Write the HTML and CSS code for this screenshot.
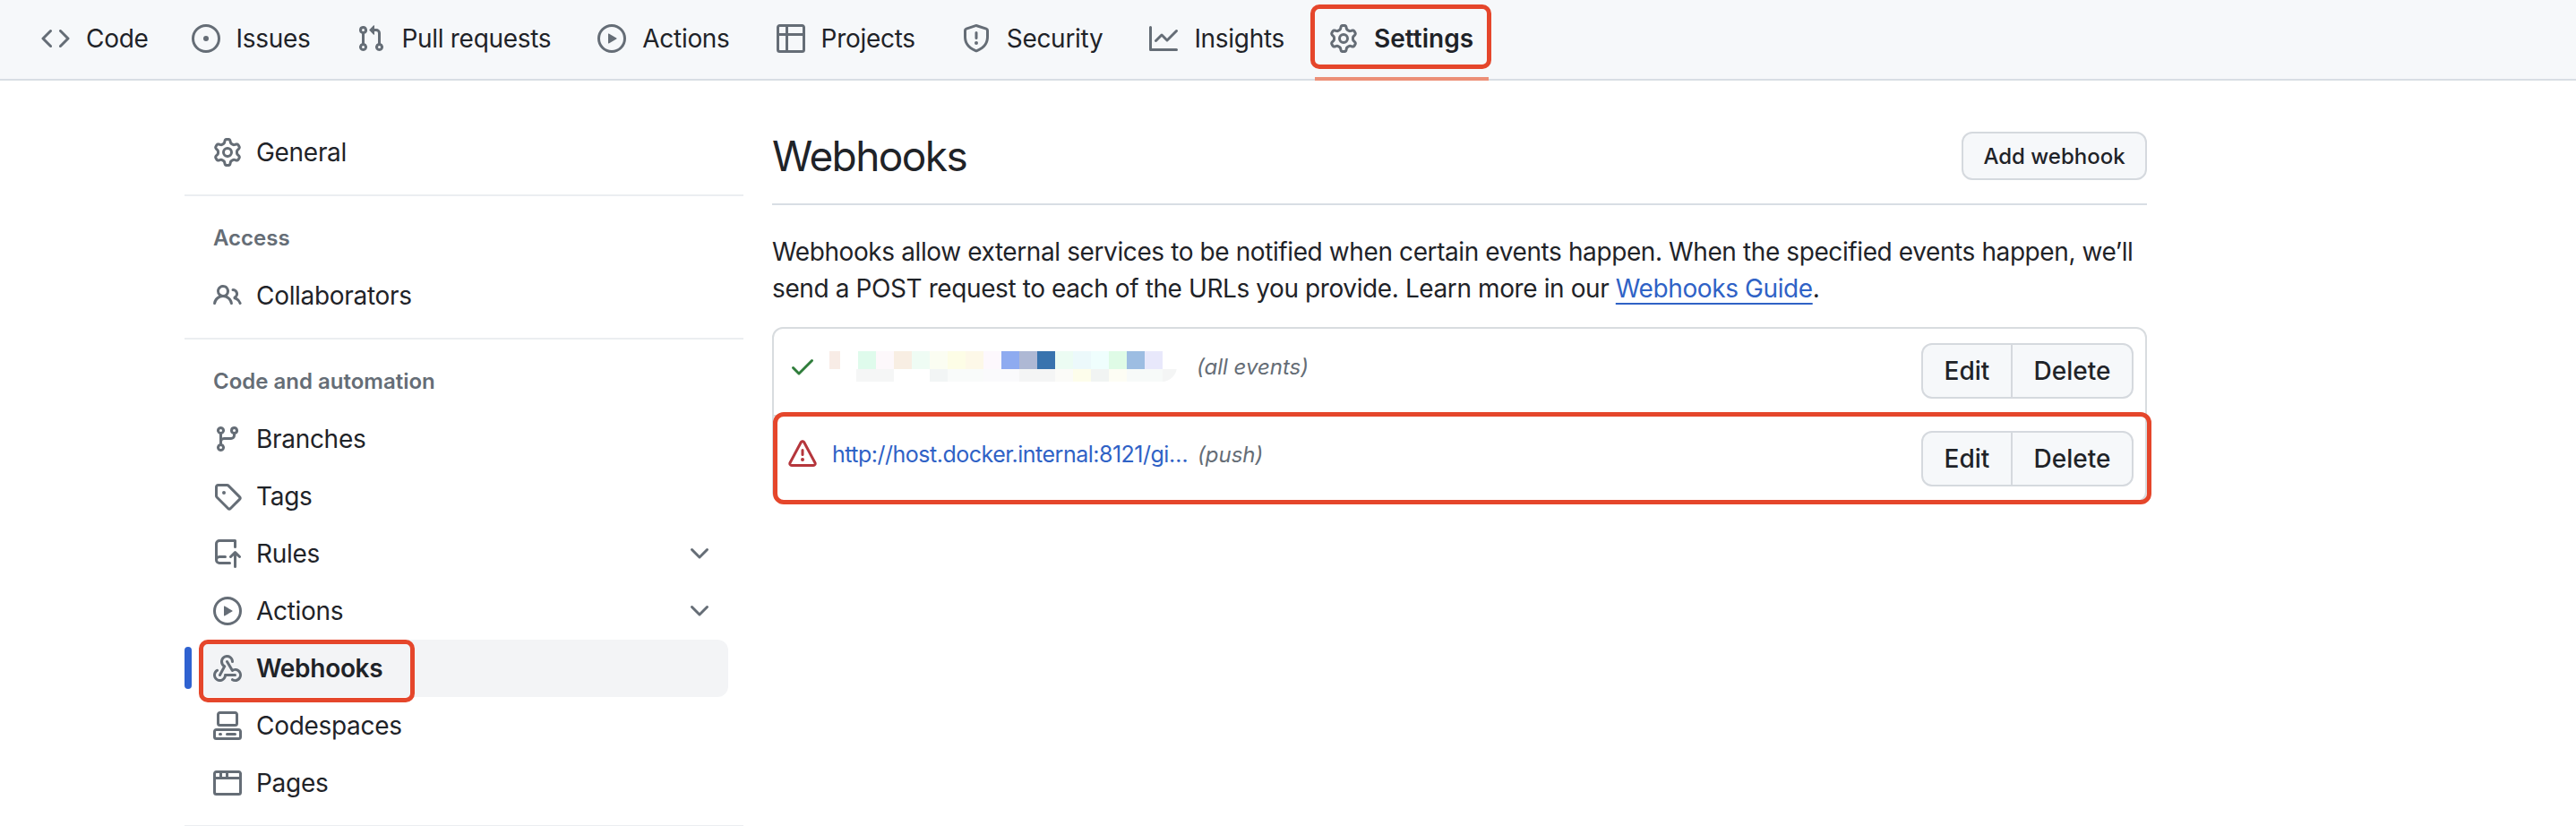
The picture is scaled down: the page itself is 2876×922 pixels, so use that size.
FILE: index.html
```html
<!DOCTYPE html>
<html lang="en">
<head>
    <meta charset="UTF-8">
    <title>Webhooks</title>
    <link rel="stylesheet" href="styles.css">
</head>
<body>
    <svg class="icon-defs" xmlns="http://www.w3.org/2000/svg">
        <symbol id="i-code" viewBox="0 0 16 16"><path d="m11.28 3.22 4.25 4.25a.75.75 0 0 1 0 1.06l-4.25 4.25a.749.749 0 0 1-1.275-.326.749.749 0 0 1 .215-.734L13.94 8l-3.72-3.72a.749.749 0 0 1 .326-1.275.749.749 0 0 1 .734.215Zm-6.56 0a.751.751 0 0 1 1.042.018.751.751 0 0 1 .018 1.042L2.06 8l3.72 3.72a.749.749 0 0 1-.326 1.275.749.749 0 0 1-.734-.215L.47 8.53a.75.75 0 0 1 0-1.06Z"/></symbol>
        <symbol id="i-issue" viewBox="0 0 16 16"><path d="M8 9.5a1.5 1.5 0 1 0 0-3 1.5 1.5 0 0 0 0 3Z"/><path d="M8 0a8 8 0 1 1 0 16A8 8 0 0 1 8 0ZM1.5 8a6.5 6.5 0 1 0 13 0 6.5 6.5 0 0 0-13 0Z"/></symbol>
        <symbol id="i-pull" viewBox="0 0 16 16"><path d="M1.5 3.25a2.25 2.25 0 1 1 3 2.122v5.256a2.251 2.251 0 1 1-1.5 0V5.372A2.25 2.25 0 0 1 1.5 3.25Zm5.677-.177L9.573.677A.25.25 0 0 1 10 .854V2.5h1A2.5 2.5 0 0 1 13.5 5v5.628a2.251 2.251 0 1 1-1.5 0V5a1 1 0 0 0-1-1h-1v1.646a.25.25 0 0 1-.427.177L7.177 3.427a.25.25 0 0 1 0-.354ZM3.75 2.5a.75.75 0 1 0 0 1.5.75.75 0 0 0 0-1.5Zm0 9.5a.75.75 0 1 0 0 1.5.75.75 0 0 0 0-1.5Zm8.25.75a.75.75 0 1 0 1.5 0 .75.75 0 0 0-1.5 0Z"/></symbol>
        <symbol id="i-play" viewBox="0 0 16 16"><path d="M8 0a8 8 0 1 1 0 16A8 8 0 0 1 8 0ZM1.5 8a6.5 6.5 0 1 0 13 0 6.5 6.5 0 0 0-13 0Zm4.879-2.773 4.264 2.559a.25.25 0 0 1 0 .428l-4.264 2.559A.25.25 0 0 1 6 10.559V5.442a.25.25 0 0 1 .379-.215Z"/></symbol>
        <symbol id="i-table" viewBox="0 0 16 16"><path d="M0 1.75C0 .784.784 0 1.75 0h12.5C15.216 0 16 .784 16 1.75v12.5A1.75 1.75 0 0 1 14.25 16H1.75A1.75 1.75 0 0 1 0 14.25ZM6.5 6.5v8h7.75a.25.25 0 0 0 .25-.25V6.5Zm8-1.5V1.75a.25.25 0 0 0-.25-.25H6.5V5Zm-13 1.5v7.75c0 .138.112.25.25.25H5v-8ZM5 5V1.5H1.75a.25.25 0 0 0-.25.25V5Z"/></symbol>
        <symbol id="i-shield" viewBox="0 0 16 16"><path d="M7.467.133a1.748 1.748 0 0 1 1.066 0l5.25 1.68A1.75 1.75 0 0 1 15 3.48V7c0 1.566-.32 3.182-1.303 4.682-.983 1.498-2.585 2.813-5.032 3.855a1.697 1.697 0 0 1-1.33 0c-2.447-1.042-4.049-2.357-5.032-3.855C1.32 10.182 1 8.566 1 7V3.48a1.75 1.75 0 0 1 1.217-1.667Zm.61 1.429a.25.25 0 0 0-.153 0l-5.25 1.68a.25.25 0 0 0-.174.238V7c0 1.358.275 2.666 1.057 3.86.784 1.194 2.121 2.34 4.366 3.297a.196.196 0 0 0 .154 0c2.245-.956 3.582-2.104 4.366-3.298C13.225 9.666 13.5 8.36 13.5 7V3.48a.251.251 0 0 0-.174-.237l-5.25-1.68ZM8.75 4.75v3a.75.75 0 0 1-1.5 0v-3a.75.75 0 0 1 1.5 0ZM9 10.5a1 1 0 1 1-2 0 1 1 0 0 1 2 0Z"/></symbol>
        <symbol id="i-graph" viewBox="0 0 16 16"><path d="M1.5 1.75V13.5h13.75a.75.75 0 0 1 0 1.5H.75a.75.75 0 0 1-.75-.75V1.75a.75.75 0 0 1 1.5 0Zm14.28 2.53-5.25 5.25a.75.75 0 0 1-1.06 0L7 7.06 4.28 9.78a.751.751 0 0 1-1.042-.018.751.751 0 0 1-.018-1.042l3.25-3.25a.75.75 0 0 1 1.06 0L10 7.94l4.72-4.72a.751.751 0 0 1 1.042.018.751.751 0 0 1 .018 1.042Z"/></symbol>
        <symbol id="i-gear" viewBox="0 0 16 16"><path d="M8 0a8.2 8.2 0 0 1 .701.031C9.444.095 9.99.645 10.16 1.29l.288 1.107c.018.066.079.158.212.224.231.114.454.243.668.386.123.082.233.09.299.071l1.103-.303c.644-.176 1.392.021 1.82.63.27.385.506.792.704 1.218.315.675.111 1.422-.364 1.891l-.814.806c-.049.048-.098.147-.088.294.016.257.016.515 0 .772-.01.147.038.246.088.294l.814.806c.475.469.679 1.216.364 1.891a7.977 7.977 0 0 1-.704 1.217c-.428.61-1.176.807-1.82.63l-1.102-.302c-.067-.019-.177-.011-.3.071a5.909 5.909 0 0 1-.668.386c-.133.066-.194.158-.211.224l-.29 1.106c-.168.646-.715 1.196-1.458 1.26a8.006 8.006 0 0 1-1.402 0c-.743-.064-1.289-.614-1.458-1.26l-.289-1.106c-.018-.066-.079-.158-.212-.224a5.738 5.738 0 0 1-.668-.386c-.123-.082-.233-.09-.299-.071l-1.103.303c-.644.176-1.392-.021-1.82-.63a8.12 8.12 0 0 1-.704-1.218c-.315-.675-.111-1.422.363-1.891l.815-.806c.05-.048.098-.147.088-.294a6.214 6.214 0 0 1 0-.772c.01-.147-.038-.246-.088-.294l-.815-.806C.635 6.045.431 5.298.746 4.623a7.92 7.92 0 0 1 .704-1.217c.428-.61 1.176-.807 1.82-.63l1.102.302c.067.019.177.011.3-.071.214-.143.437-.272.668-.386.133-.066.194-.158.211-.224l.29-1.106C6.009.645 6.556.095 7.299.03 7.53.01 7.764 0 8 0Zm-.571 1.525c-.036.003-.108.036-.137.146l-.289 1.105c-.147.561-.549.967-.998 1.189-.173.086-.34.183-.5.29-.417.278-.97.423-1.529.27l-1.103-.303c-.109-.03-.175.016-.195.045-.22.312-.412.644-.573.99-.014.031-.021.11.059.19l.815.806c.411.406.562.957.53 1.456a4.709 4.709 0 0 0 0 .582c.032.499-.119 1.05-.53 1.456l-.815.806c-.081.08-.073.159-.059.19.162.346.353.677.573.989.02.03.085.076.195.046l1.102-.303c.56-.153 1.113-.008 1.53.27.161.107.328.204.501.29.447.222.85.629.997 1.189l.289 1.105c.029.109.101.143.137.146a6.6 6.6 0 0 0 1.142 0c.036-.003.108-.036.137-.146l.289-1.105c.147-.561.549-.967.998-1.189.173-.086.34-.183.5-.29.417-.278.97-.423 1.529-.27l1.103.303c.109.029.175-.016.195-.045.22-.313.411-.644.573-.99.014-.031.021-.11-.059-.19l-.815-.806c-.411-.406-.562-.957-.53-1.456a4.709 4.709 0 0 0 0-.582c-.032-.499.119-1.05.53-1.456l.815-.806c.081-.08.073-.159.059-.19a6.464 6.464 0 0 0-.573-.989c-.02-.03-.085-.076-.195-.046l-1.102.303c-.56.153-1.113.008-1.53-.27a4.44 4.44 0 0 0-.501-.29c-.447-.222-.85-.629-.997-1.189l-.289-1.105c-.029-.11-.101-.143-.137-.146a6.6 6.6 0 0 0-1.142 0ZM11 8a3 3 0 1 1-6 0 3 3 0 0 1 6 0ZM9.5 8a1.5 1.5 0 1 0-3.001.001A1.5 1.5 0 0 0 9.5 8Z"/></symbol>
        <symbol id="i-people" viewBox="0 0 16 16"><path d="M2 5.5a3.5 3.5 0 1 1 5.898 2.549 5.508 5.508 0 0 1 3.034 4.084.75.75 0 1 1-1.482.235 4 4 0 0 0-7.9 0 .75.75 0 0 1-1.482-.236A5.507 5.507 0 0 1 3.102 8.05 3.493 3.493 0 0 1 2 5.5ZM11 4a3.001 3.001 0 0 1 2.22 5.018 5.01 5.01 0 0 1 2.56 3.012.749.749 0 0 1-.885.954.752.752 0 0 1-.549-.514 3.507 3.507 0 0 0-2.522-2.372.75.75 0 0 1-.574-.73v-.352a.75.75 0 0 1 .416-.672A1.5 1.5 0 0 0 11 5.5.75.75 0 0 1 11 4Zm-5.5-.5a2 2 0 1 0-.001 3.999A2 2 0 0 0 5.5 3.5Z"/></symbol>
        <symbol id="i-branch" viewBox="0 0 16 16"><path d="M9.5 3.25a2.25 2.25 0 1 1 3 2.122V6A2.5 2.5 0 0 1 10 8.5H6a1 1 0 0 0-1 1v1.128a2.251 2.251 0 1 1-1.5 0V5.372a2.25 2.25 0 1 1 1.5 0v1.836A2.493 2.493 0 0 1 6 7h4a1 1 0 0 0 1-1v-.628A2.25 2.25 0 0 1 9.5 3.25Zm-6 0a.75.75 0 1 0 1.5 0 .75.75 0 0 0-1.5 0Zm8.25-.75a.75.75 0 1 0 0 1.5.75.75 0 0 0 0-1.5ZM4.25 12a.75.75 0 1 0 0 1.5.75.75 0 0 0 0-1.5Z"/></symbol>
        <symbol id="i-tag" viewBox="0 0 16 16"><path d="M1 7.775V2.75C1 1.784 1.784 1 2.75 1h5.025c.464 0 .91.184 1.238.513l6.25 6.25a1.75 1.75 0 0 1 0 2.474l-5.026 5.026a1.75 1.75 0 0 1-2.474 0l-6.25-6.25A1.752 1.752 0 0 1 1 7.775Zm1.5 0c0 .066.026.13.073.177l6.25 6.25a.25.25 0 0 0 .354 0l5.025-5.025a.25.25 0 0 0 0-.354l-6.25-6.25a.25.25 0 0 0-.177-.073H2.75a.25.25 0 0 0-.25.25ZM6 5a1 1 0 1 1 0 2 1 1 0 0 1 0-2Z"/></symbol>
        <symbol id="i-rules" viewBox="0 0 16 16"><path d="M1 2.5A2.5 2.5 0 0 1 3.5 0h8.75a.75.75 0 0 1 .75.75v3.5a.75.75 0 0 1-1.5 0V1.5h-8a1 1 0 0 0-1 1v6.708A2.493 2.493 0 0 1 3.5 9h3.25a.75.75 0 0 1 0 1.5H3.5a1 1 0 0 0 0 2h5.75a.75.75 0 0 1 0 1.5H3.5A2.5 2.5 0 0 1 1 11.5Zm13.23 7.79h-.001l-1.224-1.224v6.184a.75.75 0 0 1-1.5 0V9.066L10.28 10.29a.75.75 0 0 1-1.06-1.061l2.505-2.504a.75.75 0 0 1 1.06 0L15.29 9.23a.751.751 0 0 1-.018 1.042.751.751 0 0 1-1.042.018Z"/></symbol>
        <symbol id="i-chevron" viewBox="0 0 16 16"><path d="M12.78 5.22a.749.749 0 0 1 0 1.06l-4.25 4.25a.749.749 0 0 1-1.06 0L3.22 6.28a.749.749 0 1 1 1.06-1.06L8 8.939l3.72-3.719a.749.749 0 0 1 1.06 0Z"/></symbol>
        <symbol id="i-webhook" viewBox="0 0 16 16"><path d="M5.5 4.25a2.25 2.25 0 0 1 4.5 0 .75.75 0 0 0 1.5 0 3.75 3.75 0 1 0-6.14 2.889l-2.272 4.258a.75.75 0 0 0 1.324.706L7 7.25a.75.75 0 0 0-.309-1.017A2.25 2.25 0 0 1 5.5 4.25Z"/><path d="M7.364 3.607a.75.75 0 0 1 1.03.257l2.608 4.349a3.75 3.75 0 1 1-.628 6.785.75.75 0 0 1 .752-1.299 2.25 2.25 0 1 0-.033-3.88.75.75 0 0 1-1.03-.256L7.107 4.636a.75.75 0 0 1 .257-1.03Z"/><path d="M2.9 8.776A.75.75 0 0 1 2.625 9.8 2.25 2.25 0 1 0 6 11.75a.75.75 0 0 1 .75-.751h5.5a.75.75 0 0 1 0 1.5H7.425a3.751 3.751 0 1 1-5.55-3.998.75.75 0 0 1 1.024.274Z"/></symbol>
        <symbol id="i-codespaces" viewBox="0 0 16 16"><path d="M0 11.25c0-.966.784-1.75 1.75-1.75h12.5c.966 0 1.75.784 1.75 1.75v3A1.75 1.75 0 0 1 14.25 16H1.75A1.75 1.75 0 0 1 0 14.25Zm2-9.5C2 .784 2.784 0 3.75 0h8.5C13.216 0 14 .784 14 1.75v5a1.75 1.75 0 0 1-1.75 1.75h-8.5A1.75 1.75 0 0 1 2 6.75Zm1.75-.25a.25.25 0 0 0-.25.25v5c0 .138.112.25.25.25h8.5a.25.25 0 0 0 .25-.25v-5a.25.25 0 0 0-.25-.25Zm-2 9.5a.25.25 0 0 0-.25.25v3c0 .138.112.25.25.25h12.5a.25.25 0 0 0 .25-.25v-3a.25.25 0 0 0-.25-.25Z"/><path d="M7 12.75a.75.75 0 0 1 .75-.75h4.5a.75.75 0 0 1 0 1.5h-4.5a.75.75 0 0 1-.75-.75Zm-4 0a.75.75 0 0 1 .75-.75h.5a.75.75 0 0 1 0 1.5h-.5a.75.75 0 0 1-.75-.75Z"/></symbol>
        <symbol id="i-browser" viewBox="0 0 16 16"><path d="M0 2.75C0 1.784.784 1 1.75 1h12.5c.966 0 1.75.784 1.75 1.75v10.5A1.75 1.75 0 0 1 14.25 15H1.75A1.75 1.75 0 0 1 0 13.25ZM14.5 6h-13v7.25c0 .138.112.25.25.25h12.5a.25.25 0 0 0 .25-.25Zm-6-3.5v2h6V2.75a.25.25 0 0 0-.25-.25ZM5 2.5v2h2v-2Zm-3.25 0a.25.25 0 0 0-.25.25V4.5h2v-2Z"/></symbol>
        <symbol id="i-check" viewBox="0 0 16 16"><path d="M13.78 4.22a.75.75 0 0 1 0 1.06l-7.25 7.25a.75.75 0 0 1-1.06 0L2.22 9.28a.751.751 0 0 1 .018-1.042.751.751 0 0 1 1.042-.018L6 10.94l6.72-6.72a.75.75 0 0 1 1.06 0Z"/></symbol>
        <symbol id="i-alert" viewBox="0 0 16 16"><path d="M6.457 1.047c.659-1.234 2.427-1.234 3.086 0l6.082 11.378A1.75 1.75 0 0 1 14.082 15H1.918a1.75 1.75 0 0 1-1.543-2.575Zm1.763.707a.25.25 0 0 0-.44 0L1.698 13.132a.25.25 0 0 0 .22.368h12.164a.25.25 0 0 0 .22-.368Zm.53 3.996v2.5a.75.75 0 0 1-1.5 0v-2.5a.75.75 0 0 1 1.5 0ZM9 11a1 1 0 1 1-2 0 1 1 0 0 1 2 0Z"/></symbol>
    </svg>

    <nav class="repo-nav">
        <a class="tab"><svg class="icon"><use href="#i-code"/></svg>Code</a>
        <a class="tab"><svg class="icon"><use href="#i-issue"/></svg>Issues</a>
        <a class="tab"><svg class="icon"><use href="#i-pull"/></svg>Pull requests</a>
        <a class="tab"><svg class="icon"><use href="#i-play"/></svg>Actions</a>
        <a class="tab"><svg class="icon"><use href="#i-table"/></svg>Projects</a>
        <a class="tab"><svg class="icon"><use href="#i-shield"/></svg>Security</a>
        <a class="tab"><svg class="icon"><use href="#i-graph"/></svg>Insights</a>
        <a class="tab tab-selected"><svg class="icon"><use href="#i-gear"/></svg>Settings</a>
    </nav>

    <div class="layout">
        <aside class="sidebar">
            <a class="side-item"><svg class="icon"><use href="#i-gear"/></svg>General</a>
            <hr class="side-rule">
            <h2 class="side-heading">Access</h2>
            <a class="side-item"><svg class="icon"><use href="#i-people"/></svg>Collaborators</a>
            <hr class="side-rule">
            <h2 class="side-heading">Code and automation</h2>
            <a class="side-item"><svg class="icon"><use href="#i-branch"/></svg>Branches</a>
            <a class="side-item"><svg class="icon"><use href="#i-tag"/></svg>Tags</a>
            <a class="side-item"><svg class="icon"><use href="#i-rules"/></svg>Rules<svg class="chevron"><use href="#i-chevron"/></svg></a>
            <a class="side-item"><svg class="icon"><use href="#i-play"/></svg>Actions<svg class="chevron"><use href="#i-chevron"/></svg></a>
            <a class="side-item side-selected"><svg class="icon"><use href="#i-webhook"/></svg>Webhooks</a>
            <a class="side-item"><svg class="icon"><use href="#i-codespaces"/></svg>Codespaces</a>
            <a class="side-item"><svg class="icon"><use href="#i-browser"/></svg>Pages</a>
            <hr class="side-rule">
        </aside>

        <main class="content">
            <div class="page-head">
                <h1>Webhooks</h1>
                <button class="btn btn-add">Add webhook</button>
            </div>
            <p class="intro">Webhooks allow external services to be notified when certain events happen. When the specified events happen, we’ll<br>send a POST request to each of the URLs you provide. Learn more in our <a class="guide-link">Webhooks Guide</a>.</p>

            <div class="hook-list">
                <div class="hook-row hook-first">
                    <div class="hook-info">
                        <svg class="hook-icon icon-ok"><use href="#i-check"/></svg>
                        <span class="hook-mosaic"></span>
                        <span class="hook-events">(all events)</span>
                    </div>
                    <div class="btn-group">
                        <button class="btn">Edit</button>
                        <button class="btn">Delete</button>
                    </div>
                </div>
                <div class="hook-row hook-marked">
                    <div class="hook-info">
                        <svg class="hook-icon icon-bad"><use href="#i-alert"/></svg>
                        <a class="hook-url">http://host.docker.internal:8121/gi…</a>
                        <span class="hook-events">(push)</span>
                    </div>
                    <div class="btn-group">
                        <button class="btn">Edit</button>
                        <button class="btn">Delete</button>
                    </div>
                </div>
            </div>
        </main>
    </div>
</body>
</html>
```

FILE: styles.css
```css
html, body {
    margin: 0;
    height: 922px;
    overflow: hidden;
    background: #fff;
}
body {
    font-family: Inter, "Liberation Sans", sans-serif;
    font-size: 28px;
    color: #1f2328;
}
.icon-defs {
    display: none;
}
.icon {
    width: 32px;
    height: 32px;
    fill: #656d76;
    flex: none;
}

/* top nav */
.repo-nav {
    display: flex;
    align-items: center;
    gap: 52px;
    height: 90px;
    padding-left: 46px;
    padding-bottom: 2px;
    box-sizing: border-box;
    background: #f6f8fa;
    border-bottom: 2px solid #d8dee4;
}
.tab {
    display: flex;
    align-items: center;
    gap: 18px;
    position: relative;
    letter-spacing: -0.3px;
}
.tab:first-child {
    margin-right: -4px;
}
.tab-selected {
    font-weight: 600;
    letter-spacing: 0;
    margin-left: -2px;
}
.tab-selected::before {
    content: "";
    position: absolute;
    left: -21px;
    right: -20px;
    top: -21px;
    height: 72px;
    box-sizing: border-box;
    border: 5px solid #e5462b;
    border-radius: 10px;
}
.tab-selected::after {
    content: "";
    position: absolute;
    left: -16px;
    right: -17px;
    top: 60px;
    height: 4px;
    background: #ec8f77;
}

/* layout */
.layout {
    display: flex;
    padding: 48px 0 0 206px;
    gap: 32px;
}
.sidebar {
    width: 624px;
    flex: none;
}
.side-item {
    display: flex;
    align-items: center;
    gap: 16px;
    height: 64px;
    margin: 0 17px 0 16px;
    padding: 0 16px 0 16px;
    border-radius: 12px;
    position: relative;
    letter-spacing: -0.3px;
}
.chevron {
    width: 32px;
    height: 32px;
    fill: #656d76;
    margin-left: auto;
}
.side-rule {
    border: 0;
    height: 2px;
    background: #ebeef1;
    margin: 15px 0 0;
}
.side-heading {
    margin: 27px 0 12px 32px;
    height: 40px;
    line-height: 40px;
    font-size: 24px;
    font-weight: 600;
    color: #656d76;
}
.side-selected {
    background: #f3f4f6;
    font-weight: 600;
}
.side-selected::before {
    content: "";
    position: absolute;
    left: -16px;
    top: 8px;
    width: 8px;
    height: 47px;
    border-radius: 4px;
    background: #2f62d0;
}
.side-selected::after {
    content: "";
    position: absolute;
    left: 0;
    top: 0;
    width: 241px;
    height: 70px;
    box-sizing: border-box;
    border: 5px solid #e5462b;
    border-radius: 10px;
}

/* main column */
.content {
    width: 1535px;
    flex: none;
}
.page-head {
    display: flex;
    justify-content: space-between;
    align-items: center;
    margin-top: 9px;
    padding-bottom: 26px;
    border-bottom: 2px solid #d8dee4;
}
h1 {
    margin: 0;
    font-size: 46px;
    font-weight: 400;
    line-height: 54px;
    letter-spacing: -1.6px;
}
.btn {
    font-family: inherit;
    font-size: 28px;
    font-weight: 500;
    color: #1f2328;
    height: 62px;
    padding: 0 16px;
    background: #f6f8fa;
    border: 2px solid #d5d9de;
    border-radius: 12px;
}
.btn-add {
    width: 207px;
    height: 54px;
    padding: 0;
    font-size: 24px;
}
.intro {
    margin: 32px 0 22px;
    line-height: 41px;
    letter-spacing: -0.4px;
    white-space: nowrap;
}
.guide-link {
    color: #2f62c6;
    text-decoration: underline;
    text-underline-offset: 6px;
    text-decoration-thickness: 2px;
}

/* webhook list */
.hook-list {
    border: 2px solid #d8dcdf;
    border-radius: 12px;
}
.hook-row {
    display: flex;
    justify-content: space-between;
    align-items: center;
    padding: 16px 13px 16px 16px;
    position: relative;
}
.hook-first {
    padding-bottom: 18px;
}
.hook-marked {
    border-top: 2px solid #d8dcdf;
}
.hook-marked::after {
    content: "";
    position: absolute;
    left: -1px;
    right: -7px;
    top: -5px;
    bottom: -4px;
    box-sizing: border-box;
    border: 5px solid #e5462b;
    border-radius: 12px;
    pointer-events: none;
}
.hook-info {
    display: flex;
    align-items: center;
    padding-bottom: 10px;
    font-size: 25px;
}
.hook-icon {
    width: 32px;
    height: 32px;
    flex: none;
    margin-right: 17px;
}
.icon-ok {
    fill: #2f7d3b;
}
.icon-bad {
    fill: #b5363c;
}
.hook-mosaic {
    width: 388px;
    height: 34px;
    margin-left: -3px;
    margin-right: 22px;
    border-radius: 0 18px 18px 0;
    background:
        linear-gradient(to right,
            #f8ece6 0 12px, #fff 12px 32px, #dffbec 32px 52px, #fdf8fb 52px 72px,
            #f8eee3 72px 92px, #effcf4 92px 112px, #fbfdf2 112px 132px, #fdfde6 132px 152px,
            #fdf8e8 152px 172px, #fdf8fd 172px 192px, #8eabf0 192px 212px, #aeb8d4 212px 232px,
            #3873ae 232px 252px, #ecfcf3 252px 272px, #ecf9fb 272px 292px, #effefd 292px 312px,
            #dffbe6 312px 332px, #9dbde2 332px 352px, #e8e8fb 352px 372px, #fff 372px) top / 100% 20px no-repeat,
        linear-gradient(to right,
            #fff 0 30px, #f5f6f6 30px 72px, #fff 72px 112px, #f2f5f5 112px 132px,
            #f9fbfa 132px 172px, #fafafc 172px 212px, #f4f5f5 212px 252px, #fbfbf8 252px 272px,
            #fdfdeb 272px 292px, #f1f4f3 292px 312px, #fdfdf4 312px 332px, #f7faf9 332px 372px,
            #f4f5f5 372px) bottom / 100% 14px no-repeat;
}
.hook-url {
    display: block;
    width: 397px;
    margin-right: 11px;
    color: #2f62c6;
    white-space: nowrap;
    letter-spacing: -0.5px;
}
.hook-events {
    font-size: 24px;
    font-style: italic;
    color: #656d76;
}
.btn-group {
    display: flex;
}
.btn-group .btn {
    width: 102px;
    border-radius: 12px 0 0 12px;
}
.btn-group .btn + .btn {
    width: 137px;
    margin-left: -2px;
    border-radius: 0 12px 12px 0;
}
```
